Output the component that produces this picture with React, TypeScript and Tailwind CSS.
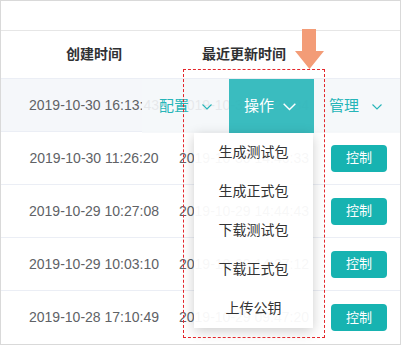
import React from 'react';

const rows = [
  { created: '2019-10-30 16:13:43', updated: '2019-10-30 14:20:34' },
  { created: '2019-10-30 11:26:20', updated: '2019-10-30 14:46:33' },
  { created: '2019-10-29 10:27:08', updated: '2019-10-29 14:44:43' },
  { created: '2019-10-29 10:03:10', updated: '2019-10-29 14:27:12' },
  { created: '2019-10-28 17:10:49', updated: '2019-10-29 09:47:20' },
];

const menuItems = ['生成测试包', '生成正式包', '下载测试包', '下载正式包', '上传公钥'];

const font = { fontFamily: '"Liberation Sans", "Noto Sans CJK SC", sans-serif' };

function Chevron({ className, w = 10 }: { className?: string; w?: number }) {
  return (
    <svg className={className} width={w} height={w * 0.6} viewBox="0 0 10 6" fill="none">
      <polyline points="0.5,0.5 5,5 9.5,0.5" stroke="currentColor" strokeWidth={1.1} />
    </svg>
  );
}

export default function App() {
  return (
    <div className="w-[403px] h-[346px] bg-white" style={font}>
      <div className="relative w-[401px] h-[345px] border border-[#d9d9d9] bg-white overflow-hidden">
        {/* top strip */}
        <div className="h-[30px] border-b border-[#e6e6e6]" />

        {/* header */}
        <div className="flex h-[48px] items-center border-b border-[#ebeef5] text-[14px] font-bold text-[#303133]">
          <div className="w-[186px] flex justify-center">创建时间</div>
          <div className="w-[114px] flex justify-center">最近更新时间</div>
          <div className="flex-1" />
        </div>

        {/* body */}
        {rows.map((r, i) => (
          <div
            key={i}
            className={`relative flex h-[53px] items-center text-[14px] text-[#606266] ${i < rows.length - 1 ? 'border-b border-[#ebeef5]' : ''} ${i === 0 ? 'bg-[#f5f7fa]' : ''}`}
          >
            <div className="w-[186px] flex justify-center whitespace-nowrap">{r.created}</div>
            <div className="w-[114px] flex justify-center whitespace-nowrap">{r.updated}</div>
            <div className="flex-1 pl-[30px]">
              {i > 0 && (
                <button className="w-[56px] h-[27px] rounded-[4px] bg-[#17b3b1] text-white text-[13px]">控制</button>
              )}
            </div>

            {i === 0 && (
              <div className="absolute left-[141px] top-0 right-0 h-[54px] flex items-center bg-[#f5f7fa]/90 text-[15px] text-[#26b5b8]">
                <span className="ml-[17px]">配置</span>
                <Chevron className="ml-[13px] mt-[2px]" />
                <div className="ml-[17px] w-[85px] h-full flex items-center bg-[#26b5b8]/90 text-white">
                  <span className="ml-[15px]">操作</span>
                  <Chevron className="ml-[9px] mt-[2px]" w={13} />
                </div>
                <span className="ml-[15px]">管理</span>
                <Chevron className="ml-[13px] mt-[2px]" />
              </div>
            )}
          </div>
        ))}

        {/* dropdown menu */}
        <div className="absolute left-[193px] top-[132px] w-[119px] bg-white/95 shadow-[0_3px_12px_rgba(0,0,0,0.2)] text-[14px] text-[#333]">
          {menuItems.map((m) => (
            <div key={m} className="h-[39px] flex items-center justify-center">{m}</div>
          ))}
        </div>

        {/* annotation box */}
        <div className="absolute left-[182px] top-[68px] w-[142px] h-[269px] border border-dashed border-[#e3262b]" />

        {/* arrow */}
        <svg className="absolute left-[293px] top-[28px]" width="31" height="41" viewBox="0 0 31 41">
          <polygon points="8,0 22,0 22,22 30,22 15.5,40 1,22 8,22" fill="#f39c77" />
        </svg>
      </div>
    </div>
  );
}
